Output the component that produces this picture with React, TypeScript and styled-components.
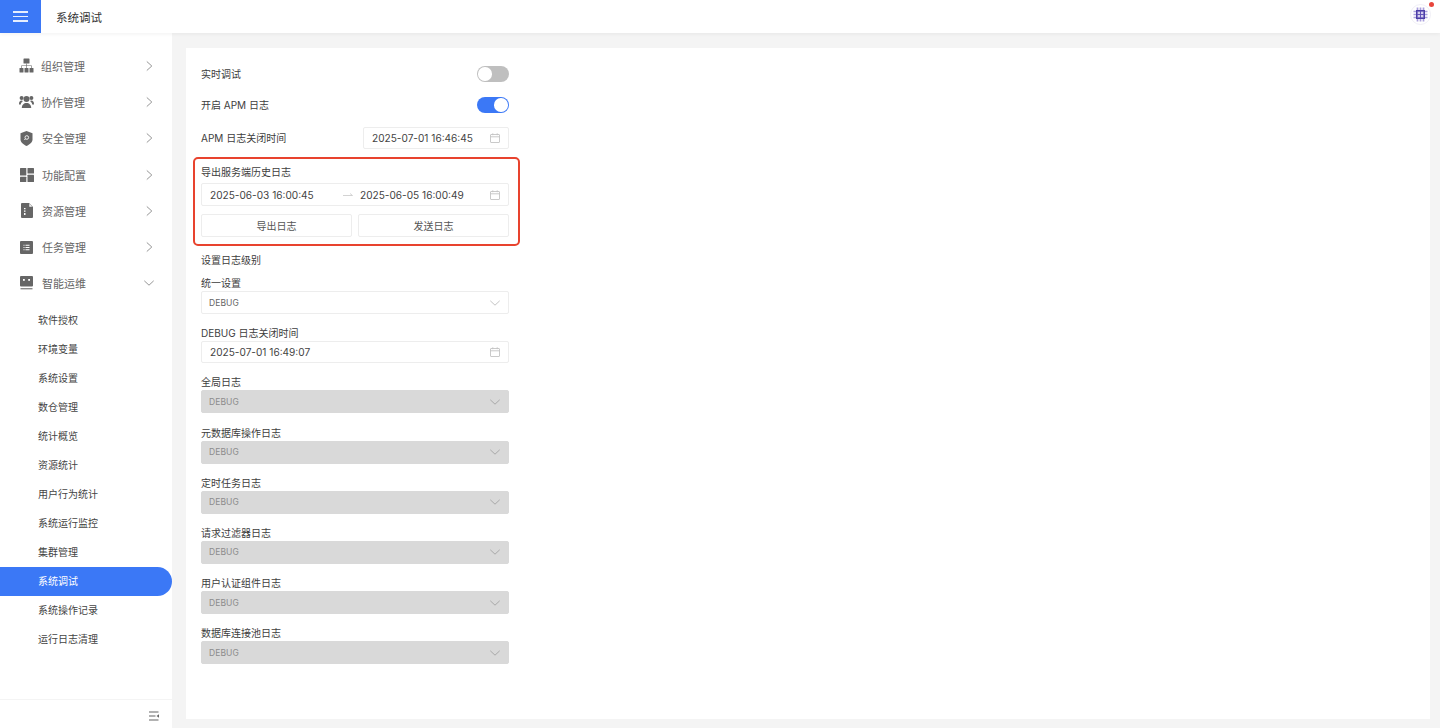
import React from 'react';
import styled, { createGlobalStyle } from 'styled-components';

const FONT = `Inter, "Noto Sans CJK SC", "Noto Sans", sans-serif`;

const GlobalStyle = createGlobalStyle`
  html, body { margin: 0; padding: 0; height: 100%; }
  body { font-family: ${FONT}; background: #f4f4f4; color: #333; }
  * { box-sizing: border-box; }
`;

const Chevron = ({ open, color = '#8a8a8a' }: { open?: boolean; color?: string }) => (
  <svg width="10" height="12" viewBox="0 0 10 12" fill="none" stroke={color} strokeWidth="0.9">
    {open ? <path d="M0.300 3.800 5 8.200 9.700 3.800" /> : <path d="M2.800 1.500 7.800 6 2.800 10.500" />}
  </svg>
);

const CalendarIcon = () => (
  <svg width="10" height="10" viewBox="0 0 10 10" fill="none" stroke="#c4c4c4" strokeWidth="0.9">
    <rect x="0.5" y="1.5" width="9" height="8" rx="0.5" />
    <path d="M0.5 3.8H9.5M2.8 0.3V2.2M7.2 0.3V2.2" />
  </svg>
);

const OrgIcon = () => (
  <svg width="15" height="15" viewBox="0 0 15 15" fill="#666">
    <rect x="4.5" y="0.5" width="6" height="5" rx="0.6" />
    <rect x="0.5" y="10" width="4" height="4.5" rx="0.6" />
    <rect x="5.5" y="10" width="4" height="4.5" rx="0.6" />
    <rect x="10.5" y="10" width="4" height="4.5" rx="0.6" />
    <path d="M7.2 5.5h.6v2h5v2.5h-.6V8.1H7.8V10h-.6V8.1H2.8V10h-.6V7.5h5z" />
  </svg>
);

const TeamIcon = () => (
  <svg width="15" height="13" viewBox="0 0 15 13" fill="#666">
    <circle cx="7.5" cy="4" r="3" />
    <circle cx="2.6" cy="3" r="2" />
    <circle cx="12.4" cy="3" r="2" />
    <path d="M2.8 13c0-3 2-5 4.7-5s4.7 2 4.7 5z" />
    <path d="M0 9c0-2 1-3.400 2.600-3.400.6 0 1 .2 1.400.5C2.800 7 2 8 1.800 9.500H0zM15 9c0-2-1-3.400-2.600-3.400-.6 0-1 .2-1.400.5C12.200 7 13 8 13.200 9.500H15z" />
  </svg>
);

const ShieldIcon = () => (
  <svg width="13" height="15" viewBox="0 0 13 15">
    <path d="M6.500 0 12.500 2.200V8.500C12.500 11.500 9.500 13.500 6.500 15 3.500 13.500.5 11.500.5 8.500V2.200z" fill="#666" />
    <circle cx="6.800" cy="6.500" r="1.800" fill="none" stroke="#fff" strokeWidth="0.9" />
    <path d="M5.500 7.800 4.300 9" stroke="#fff" strokeWidth="0.9" />
  </svg>
);

const GridIcon = () => (
  <svg width="14" height="14" viewBox="0 0 14 14" fill="#666">
    <rect x="0" y="0" width="6.300" height="7.500" rx="0.5" />
    <rect x="7.500" y="0" width="6.500" height="5.500" rx="0.5" />
    <rect x="0" y="8.700" width="6.300" height="5.300" rx="0.5" />
    <rect x="7.500" y="6.700" width="6.500" height="7.300" rx="0.5" />
  </svg>
);

const FileIcon = () => (
  <svg width="12" height="15" viewBox="0 0 12 15">
    <path d="M1 0H8L12 4V14a1 1 0 0 1-1 1H1a1 1 0 0 1-1-1V1a1 1 0 0 1 1-1z" fill="#666" />
    <path d="M8.300.8 11.200 3.700H8.300z" fill="#fff" />
    <path d="M3 5h1.500v1.200H3zM3 7.500h1.500v1.200H3zM3 10h1.500v2H3z" fill="#fff" />
  </svg>
);

const TaskIcon = () => (
  <svg width="13" height="13" viewBox="0 0 13 13">
    <rect width="13" height="13" rx="1" fill="#666" />
    <path d="M3.500 3.700h1v1h-1zM3.500 6h1v1h-1zM3.500 8.300h1v1h-1zM5.500 3.700h4v1h-4zM5.500 6h4v1h-4zM5.500 8.300h4v1h-4z" fill="#fff" />
  </svg>
);

const OpsIcon = () => (
  <svg width="13" height="15" viewBox="0 0 13 15">
    <rect width="13" height="10.500" rx="1" fill="#666" />
    <rect x="3" y="3" width="1.800" height="1.800" fill="#fff" />
    <rect x="8.200" y="3" width="1.800" height="1.800" fill="#fff" />
    <rect x="0.500" y="12" width="12" height="1.400" fill="#8a8a8a" />
  </svg>
);

const Logo = () => (
  <svg width="21" height="21" viewBox="0 0 21 21">
    <circle cx="10.500" cy="10.500" r="10" fill="#fff" stroke="#ecebf4" strokeWidth="0.8" />
    <path
      d="M7.500 3.500V17.500M10.500 3.500V17.500M13.500 3.500V17.500M3.500 7.500H17.500M3.500 10.500H17.500M3.500 13.500H17.500"
      stroke="#a99fdc"
      strokeWidth="1.700"
      fill="none"
    />
    <rect x="6.700" y="6.700" width="7.600" height="7.600" fill="none" stroke="#4b3da6" strokeWidth="1.400" />
    <path d="M10.500 6.700V14.300M6.700 10.500H14.300" stroke="#5c4eb4" strokeWidth="0.900" />
  </svg>
);

const CollapseIcon = () => (
  <svg width="10" height="10" viewBox="0 0 10 10" fill="#666">
    <path d="M0 0.600h9.500v0.900H0zM0 4.600h6.500v0.900H0zM0 8.600h9.500v0.900H0z" />
    <path d="M10 3.200 7.500 5 10 6.800z" />
  </svg>
);

const Page = styled.div`
  width: 1440px;
  height: 728px;
  display: flex;
  flex-direction: column;
  overflow: hidden;
`;

const Header = styled.header`
  height: 33px;
  flex: none;
  display: flex;
  align-items: center;
  background: #fff;
  box-shadow: 0 1px 4px rgba(0, 0, 0, 0.06);
  position: relative;
  z-index: 1;
  padding-right: 9.500px;
`;

const MenuButton = styled.div`
  width: 41px;
  height: 33px;
  background: #3b78f6;
  display: flex;
  flex-direction: column;
  align-items: center;
  justify-content: center;
  gap: 3px;
`;

const MenuLine = styled.span`
  width: 15px;
  height: 1.500px;
  background: #e6eefe;
`;

const HeaderTitle = styled.div`
  margin-left: 15px;
  flex: 1;
  font-size: 11.500px;
  color: #333;
`;

const Avatar = styled.div`
  position: relative;
  display: flex;
  margin-bottom: 4px;
`;

const Dot = styled.span`
  position: absolute;
  top: -2.500px;
  right: -3.500px;
  width: 5px;
  height: 5px;
  border-radius: 50%;
  background: #e8453c;
`;

const Body = styled.div`
  flex: 1;
  display: flex;
  min-height: 0;
`;

const Sidebar = styled.aside`
  width: 172px;
  flex: none;
  background: #fff;
  display: flex;
  flex-direction: column;
  padding-top: 14.500px;
`;

const MenuList = styled.nav`
  flex: 1;
`;

const TopItem = styled.div`
  height: 36.300px;
  display: flex;
  align-items: center;
  padding: 0 18px 0 19px;
  font-size: 11px;
  color: #666;
`;

const TopIcon = styled.span`
  width: 15px;
  height: 15px;
  display: flex;
  align-items: center;
  justify-content: center;
  flex: none;
`;

const TopLabel = styled.span<{ $shift: number }>`
  flex: 1;
  margin-left: ${(p) => p.$shift}px;
`;

const SubList = styled.div`
  padding-top: 4px;
`;

const SubItem = styled.div<{ $active?: boolean }>`
  height: 29px;
  display: flex;
  align-items: center;
  padding: 0 0 2px 38px;
  font-size: 10px;
  color: ${(p) => (p.$active ? '#fff' : '#444')};
  background: ${(p) => (p.$active ? '#3b78f6' : 'transparent')};
  border-radius: 0 15px 15px 0;
`;

const SidebarFooter = styled.div`
  height: 29px;
  flex: none;
  border-top: 1px solid #f4f4f4;
  display: flex;
  align-items: center;
  justify-content: flex-end;
  padding: 4px 13px 0 0;
`;

const Main = styled.main`
  flex: 1;
  padding: 15px 10px 9px 14px;
  min-width: 0;
`;

const Panel = styled.section`
  height: 100%;
  background: #fff;
  padding: 18px 15px;
`;

const Form = styled.div`
  width: 308px;
  display: flex;
  flex-direction: column;
`;

const Row = styled.div<{ $height: number; $mb?: number }>`
  height: ${(p) => p.$height}px;
  margin-bottom: ${(p) => p.$mb ?? 0}px;
  display: flex;
  align-items: center;
  justify-content: space-between;
`;

const Label = styled.div`
  font-size: 10px;
  line-height: 16px;
  color: #3d3d3d;
`;

const Toggle = styled.div<{ $on?: boolean }>`
  width: 32px;
  height: 16px;
  border-radius: 8px;
  padding: 1.250px;
  display: flex;
  justify-content: ${(p) => (p.$on ? 'flex-end' : 'flex-start')};
  background: ${(p) => (p.$on ? '#3b78f6' : '#bfbfbf')};
`;

const Knob = styled.span`
  width: 13.500px;
  height: 13.500px;
  border-radius: 50%;
  background: #fff;
`;

const Field = styled.div<{ $width?: number; $height?: number; $disabled?: boolean }>`
  width: ${(p) => (p.$width ? `${p.$width}px` : '100%')};
  height: ${(p) => p.$height ?? 23}px;
  border: 1px solid ${(p) => (p.$disabled ? '#d9d9d9' : '#ededed')};
  border-radius: 2px;
  background: ${(p) => (p.$disabled ? '#d9d9d9' : '#fff')};
  display: flex;
  align-items: center;
  justify-content: space-between;
  padding: 0 8px;
  flex: none;
`;

const DateText = styled.span`
  font-size: 10.100px;
  color: #444;
  white-space: nowrap;
`;

const SelectText = styled.span<{ $disabled?: boolean }>`
  margin-left: -1px;
  font-size: 8.500px;
  color: ${(p) => (p.$disabled ? '#8c8c8c' : '#666')};
  letter-spacing: 0.100px;
`;

const ExportBox = styled.div`
  margin: 8px -10.500px 6px -8px;
  height: 89px;
  border: 2px solid #e8432e;
  border-radius: 5px;
  padding: 5px 8.500px 0 6px;
  display: flex;
  flex-direction: column;
`;

const RangeRow = styled(Field)`
  margin-top: 3px;
  justify-content: flex-start;
`;

const RangeEnd = styled(DateText)`
  width: 133px;
`;

const RangeArrow = styled.span`
  width: 17px;
  display: flex;
  flex: none;
`;

const RangeIcon = styled.span`
  margin-left: auto;
  display: flex;
`;

const ButtonRow = styled.div`
  margin-top: 8px;
  display: grid;
  grid-template-columns: 1fr 1fr;
  gap: 6px;
`;

const Button = styled.div`
  height: 23px;
  border: 1px solid #ededed;
  border-radius: 2px;
  display: flex;
  align-items: center;
  justify-content: center;
  font-size: 10px;
  color: #555;
`;

const LevelGroup = styled.div`
  margin-top: 7px;
`;

const LevelBlock = styled.div`
  margin-bottom: 11.200px;
`;

const mainItems = [
  { label: '组织管理', icon: <OrgIcon />, shift: 7 },
  { label: '协作管理', icon: <TeamIcon />, shift: 7 },
  { label: '安全管理', icon: <ShieldIcon />, shift: 8 },
  { label: '功能配置', icon: <GridIcon />, shift: 8 },
  { label: '资源管理', icon: <FileIcon />, shift: 8 },
  { label: '任务管理', icon: <TaskIcon />, shift: 8 },
];

const subItems = [
  '软件授权',
  '环境变量',
  '系统设置',
  '数仓管理',
  '统计概览',
  '资源统计',
  '用户行为统计',
  '系统运行监控',
  '集群管理',
  '系统调试',
  '系统操作记录',
  '运行日志清理',
];

const disabledLevels = ['全局日志', '元数据库操作日志', '定时任务日志', '请求过滤器日志', '用户认证组件日志', '数据库连接池日志'];

const App = () => {
  return (
    <Page>
      <GlobalStyle />
      <Header>
        <MenuButton>
          <MenuLine />
          <MenuLine />
          <MenuLine />
        </MenuButton>
        <HeaderTitle>系统调试</HeaderTitle>
        <Avatar>
          <Logo />
          <Dot />
        </Avatar>
      </Header>
      <Body>
        <Sidebar>
          <MenuList>
            {mainItems.map((item) => (
              <TopItem key={item.label}>
                <TopIcon>{item.icon}</TopIcon>
                <TopLabel $shift={item.shift}>{item.label}</TopLabel>
                <Chevron />
              </TopItem>
            ))}
            <TopItem>
              <TopIcon>
                <OpsIcon />
              </TopIcon>
              <TopLabel $shift={8}>智能运维</TopLabel>
              <Chevron open />
            </TopItem>
            <SubList>
              {subItems.map((name) => (
                <SubItem key={name} $active={name === '系统调试'}>
                  {name}
                </SubItem>
              ))}
            </SubList>
          </MenuList>
          <SidebarFooter>
            <CollapseIcon />
          </SidebarFooter>
        </Sidebar>
        <Main>
          <Panel>
            <Form>
              <Row $height={16} $mb={15}>
                <Label>实时调试</Label>
                <Toggle>
                  <Knob />
                </Toggle>
              </Row>
              <Row $height={16} $mb={14}>
                <Label>开启 APM 日志</Label>
                <Toggle $on>
                  <Knob />
                </Toggle>
              </Row>
              <Row $height={22}>
                <Label>APM 日志关闭时间</Label>
                <Field $width={146} $height={22}>
                  <DateText>2025-07-01 16:46:45</DateText>
                  <CalendarIcon />
                </Field>
              </Row>
              <ExportBox>
                <Label>导出服务端历史日志</Label>
                <RangeRow>
                  <RangeEnd>2025-06-03 16:00:45</RangeEnd>
                  <RangeArrow>
                    <svg width="10" height="6" viewBox="0 0 10 6" fill="none" stroke="#c8c8c8" strokeWidth="0.8">
                      <path d="M0 3.500H9.500L7 1.500" />
                    </svg>
                  </RangeArrow>
                  <DateText>2025-06-05 16:00:49</DateText>
                  <RangeIcon>
                    <CalendarIcon />
                  </RangeIcon>
                </RangeRow>
                <ButtonRow>
                  <Button>导出日志</Button>
                  <Button>发送日志</Button>
                </ButtonRow>
              </ExportBox>
              <Label>设置日志级别</Label>
              <LevelGroup>
                <LevelBlock>
                  <Label>统一设置</Label>
                  <Field>
                    <SelectText>DEBUG</SelectText>
                    <Chevron open color="#bdbdbd" />
                  </Field>
                </LevelBlock>
                <LevelBlock>
                  <Label>DEBUG 日志关闭时间</Label>
                  <Field $height={22}>
                    <DateText>2025-07-01 16:49:07</DateText>
                    <CalendarIcon />
                  </Field>
                </LevelBlock>
                {disabledLevels.map((name) => (
                  <LevelBlock key={name}>
                    <Label>{name}</Label>
                    <Field $disabled>
                      <SelectText $disabled>DEBUG</SelectText>
                      <Chevron open color="#a3a3a3" />
                    </Field>
                  </LevelBlock>
                ))}
              </LevelGroup>
            </Form>
          </Panel>
        </Main>
      </Body>
    </Page>
  );
};

export default App;
